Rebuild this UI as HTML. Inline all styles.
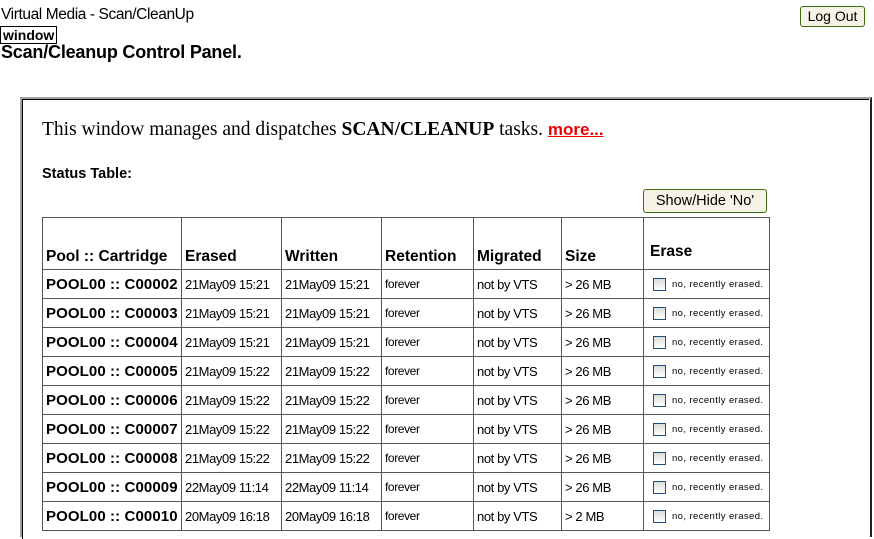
<!DOCTYPE html>
<html><head><style>
body{margin:0;background:#fff;font-family:"Liberation Sans",Arial,sans-serif;color:#000;width:874px;height:529px;overflow:hidden;position:relative}
.a{position:absolute}
#title{left:1px;top:6px;font-size:15.5px;letter-spacing:-0.4px}
#win{left:0;top:26px;border:1px solid #000;font-size:14px;font-weight:bold;padding:0 2px;line-height:16px}
#h{left:1px;top:42px;font-size:18px;font-weight:bold;letter-spacing:-0.2px}
.btn{background:#f6f3e6;border:1px solid #3d6f10;border-radius:3px;font-size:14px;text-align:center;box-sizing:border-box}
#panel{left:20px;top:97px;width:852px;height:440px;box-sizing:border-box;border-top:2px solid #a0a0a0;border-left:2px solid #a0a0a0;border-right:2px solid #222}
#panel2{left:22px;top:99px;width:847px;height:440px;box-sizing:border-box;border-top:1px solid #000;border-left:1px solid #000}
#intro{left:42px;top:119px;font-family:"Liberation Serif",serif;font-size:19.5px}
#intro a{font-family:"Liberation Sans",sans-serif;font-weight:bold;color:#e00;font-size:17px;text-decoration:underline}
#st{left:42px;top:166px;font-size:14.5px;font-weight:bold}
table{position:absolute;left:42px;top:217px;border-collapse:collapse}
td{border:1px solid #555;padding:0 0 0 3px;height:29px;font-size:13px;letter-spacing:-0.4px;vertical-align:middle;white-space:nowrap;box-sizing:border-box}
tr.hd td{height:52px;vertical-align:bottom;font-size:15.5px;font-weight:bold;padding-bottom:3px;letter-spacing:0}
td.c{font-size:15px;font-weight:bold;letter-spacing:0.1px}
td.r{font-size:12px}
td.e{font-size:9.5px;padding-left:9px;letter-spacing:0.4px}
.cb{display:inline-block;width:11px;height:11px;border:1px solid #1c5180;background:linear-gradient(#dcdcd6,#fff);vertical-align:middle;margin-right:6px}
</style></head><body>
<div class="a" id="title">Virtual Media - Scan/CleanUp</div>
<div class="a" id="win">window</div>
<div class="a" id="h">Scan/Cleanup Control Panel.</div>
<div class="a btn" style="left:800px;top:6px;width:65px;height:21px;line-height:19px">Log Out</div>
<div class="a" id="panel"></div>
<div class="a" id="panel2"></div>
<div class="a" id="intro">This window manages and dispatches <b>SCAN/CLEANUP</b> tasks. <a>more...</a></div>
<div class="a" id="st">Status Table:</div>
<div class="a btn" style="left:643px;top:189px;width:124px;height:24px;line-height:22px;font-size:14.5px">Show/Hide 'No'</div>
<table>
<colgroup><col style="width:139px"><col style="width:100px"><col style="width:100px"><col style="width:92px"><col style="width:88px"><col style="width:82px"><col style="width:126px"></colgroup>
<tr class="hd"><td>Pool :: Cartridge</td><td>Erased</td><td>Written</td><td>Retention</td><td>Migrated</td><td>Size</td><td style="padding-bottom:8px;padding-left:6px">Erase</td></tr>
<tr><td class="c">POOL00 :: C00002</td><td>21May09 15:21</td><td>21May09 15:21</td><td class="r">forever</td><td>not by VTS</td><td>&gt; 26 MB</td><td class="e"><span class="cb"></span>no, recently erased.</td></tr>
<tr><td class="c">POOL00 :: C00003</td><td>21May09 15:21</td><td>21May09 15:21</td><td class="r">forever</td><td>not by VTS</td><td>&gt; 26 MB</td><td class="e"><span class="cb"></span>no, recently erased.</td></tr>
<tr><td class="c">POOL00 :: C00004</td><td>21May09 15:21</td><td>21May09 15:21</td><td class="r">forever</td><td>not by VTS</td><td>&gt; 26 MB</td><td class="e"><span class="cb"></span>no, recently erased.</td></tr>
<tr><td class="c">POOL00 :: C00005</td><td>21May09 15:22</td><td>21May09 15:22</td><td class="r">forever</td><td>not by VTS</td><td>&gt; 26 MB</td><td class="e"><span class="cb"></span>no, recently erased.</td></tr>
<tr><td class="c">POOL00 :: C00006</td><td>21May09 15:22</td><td>21May09 15:22</td><td class="r">forever</td><td>not by VTS</td><td>&gt; 26 MB</td><td class="e"><span class="cb"></span>no, recently erased.</td></tr>
<tr><td class="c">POOL00 :: C00007</td><td>21May09 15:22</td><td>21May09 15:22</td><td class="r">forever</td><td>not by VTS</td><td>&gt; 26 MB</td><td class="e"><span class="cb"></span>no, recently erased.</td></tr>
<tr><td class="c">POOL00 :: C00008</td><td>21May09 15:22</td><td>21May09 15:22</td><td class="r">forever</td><td>not by VTS</td><td>&gt; 26 MB</td><td class="e"><span class="cb"></span>no, recently erased.</td></tr>
<tr><td class="c">POOL00 :: C00009</td><td>22May09 11:14</td><td>22May09 11:14</td><td class="r">forever</td><td>not by VTS</td><td>&gt; 26 MB</td><td class="e"><span class="cb"></span>no, recently erased.</td></tr>
<tr><td class="c">POOL00 :: C00010</td><td>20May09 16:18</td><td>20May09 16:18</td><td class="r">forever</td><td>not by VTS</td><td>&gt; 2 MB</td><td class="e"><span class="cb"></span>no, recently erased.</td></tr>
</table>
</body></html>
